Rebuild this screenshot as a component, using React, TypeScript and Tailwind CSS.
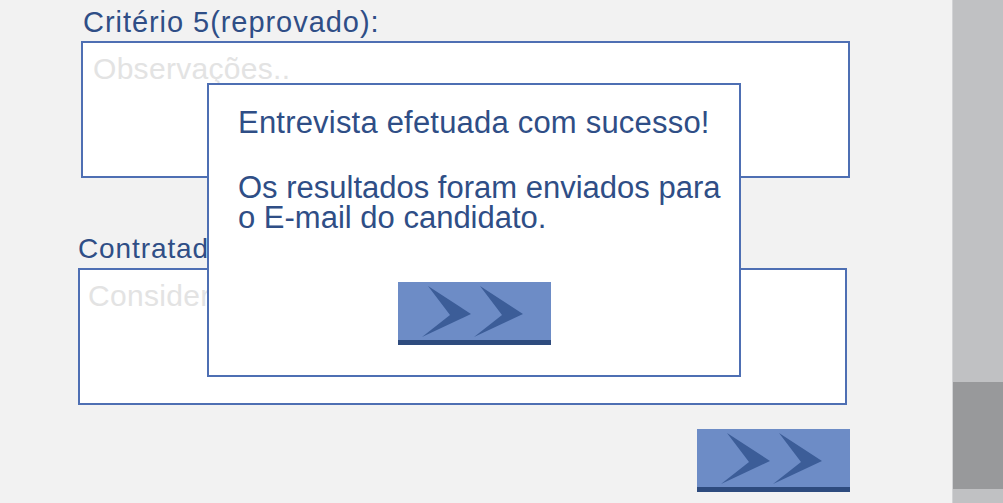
import React from 'react';

const font = { fontFamily: '"Liberation Sans", Arial, sans-serif' };

const NextButton: React.FC<{ className?: string }> = ({ className = '' }) => (
  <button className={`relative w-[153px] h-[63px] bg-[#6d8cc6] flex flex-col ${className}`}>
    <svg width="153" height="58" viewBox="0 0 153 58" className="block">
      <polygon points="30,4 73,32 24,55 52,33" fill="#3c5d98" />
      <polygon points="82,4 125,32 76,55 104,33" fill="#3c5d98" />
    </svg>
    <div className="h-[5px] w-full bg-[#2e4b7e]" />
  </button>
);

const App: React.FC = () => {
  return (
    <div className="w-[1003px] h-[503px] bg-[#f2f2f2] flex overflow-hidden text-[#2f4e86]" style={font}>
      {/* Form column */}
      <div className="flex-1 flex flex-col">
        <div className="mt-[6px] ml-[83px] h-[32px] leading-[32px] text-[29px] tracking-[0.95px]">
          Critério 5(reprovado):
        </div>
        <div className="mt-[3px] ml-[81px] w-[769px] h-[137px] border-2 border-[#4e6fb3] bg-white pt-[9px] pl-[10px]">
          <span className="text-[30px] leading-[34px] text-[#e3e3e3] tracking-[0.3px]">Observações..</span>
        </div>

        <div className="mt-[55px] ml-[78px] h-[32px] leading-[32px] text-[28px] tracking-[0.9px]">
          Contratado ou não?
        </div>
        <div className="mt-[3px] ml-[78px] w-[769px] h-[137px] border-2 border-[#4e6fb3] bg-white pt-[9px] pl-[8px]">
          <span className="text-[30px] leading-[34px] text-[#e3e3e3] tracking-[0.3px]">Considerações finais..</span>
        </div>

        <NextButton className="mt-[24px] ml-[697px]" />
      </div>

      {/* Scrollbar */}
      <div className="w-[51px] h-full bg-[#c0c1c3] border-l border-[#d2d3d5] flex flex-col">
        <div className="mt-[382px] h-[107px] bg-[#98999b]" />
      </div>

      {/* Dialog */}
      <div className="fixed left-[207px] top-[83px] w-[534px] h-[294px] border-2 border-[#4e6fb3] bg-white flex flex-col pl-[29px] pt-[21px]">
        <div className="text-[31px] leading-[33px] tracking-[0.2px]">Entrevista efetuada com sucesso!</div>
        <div className="mt-[33px] text-[31px] leading-[31px]">Os resultados foram enviados para</div>
        <div className="text-[31px] leading-[30px]">o E-mail do candidato.</div>
        <NextButton className="mt-[49px] ml-[160px]" />
      </div>
    </div>
  );
};

export default App;
